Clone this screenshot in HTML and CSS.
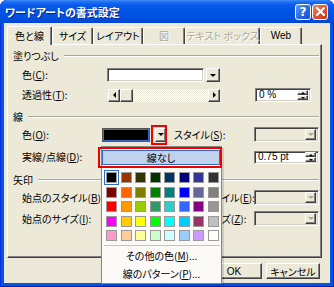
FILE: index.html
```html
<!DOCTYPE html>
<html lang="ja">
<head>
<meta charset="utf-8">
<title>ワードアートの書式設定</title>
<link rel="stylesheet" href="styles.css">
</head>
<body>
<div class="window">
  <div class="titlebar">
    <span class="title">ワードアートの書式設定</span>
    <div class="tbtns">
      <span class="tbtn help">?</span>
      <span class="tbtn close"><svg width="9" height="9" viewBox="0 0 9 9"><path d="M1 1L8 8M8 1L1 8" stroke="#fff" stroke-width="2" stroke-linecap="square"/></svg></span>
    </div>
  </div>
  <div class="client">
    <div class="tabs">
      <div class="tab sel">色と線</div>
      <div class="tab w-size">サイズ</div>
      <div class="tab w-layout">レイアウト</div>
      <div class="tab dis w-pic">図</div>
      <div class="tab dis w-text">テキスト ボックス</div>
      <div class="tab w-web">Web</div>
    </div>
    <div class="panel">
      <div class="group g1"><span>塗りつぶし</span><i class="etch"></i></div>
      <div class="row r1">
        <span class="lbl">色(<u>C</u>):</span>
        <div class="combo fillcombo">
          <span class="field white inset"></span>
          <span class="ddb raised"><i class="tri"></i></span>
        </div>
      </div>
      <div class="row r2">
        <span class="lbl">透過性(<u>T</u>):</span>
        <div class="scroll">
          <span class="sbtn raised"><i class="tri-l"></i></span>
          <span class="thumb raised"></span>
          <span class="track"></span>
          <span class="sbtn raised"><i class="tri-r"></i></span>
        </div>
        <div class="spin pct inset">
          <span class="val">0 %</span>
          <span class="spinbtns"><span class="sp raised"><i class="tri-u"></i></span><span class="sp raised"><i class="tri-d"></i></span></span>
        </div>
      </div>
      <div class="group g2"><span>線</span><i class="etch"></i></div>
      <div class="row r3">
        <span class="lbl">色(<u>O</u>):</span>
        <div class="colorcombo">
          <span class="blackfield"></span>
          <span class="cddb raised"><i class="tri"></i></span>
        </div>
        <span class="lbl2">スタイル(<u>S</u>):</span>
        <div class="dcombo inset"><span class="ddb2 raised"><i class="tri gray"></i></span></div>
      </div>
      <div class="row r4">
        <span class="lbl">実線/点線(<u>D</u>):</span>
        <span class="lbl2"></span>
        <div class="spin pt inset">
          <span class="val">0.75 pt</span>
          <span class="spinbtns"><span class="sp raised"><i class="tri-u"></i></span><span class="sp raised"><i class="tri-d"></i></span></span>
        </div>
      </div>
      <div class="group g3"><span>矢印</span><i class="etch"></i></div>
      <div class="row r5">
        <span class="lbl">始点のスタイル(<u>B</u>):</span>
        <span class="lbl2">終点のスタイル(<u>E</u>):</span>
        <div class="dcombo inset"><span class="ddb2 raised"><i class="tri gray"></i></span></div>
      </div>
      <div class="row r6">
        <span class="lbl">始点のサイズ(<u>I</u>):</span>
        <span class="lbl2">終点のサイズ(<u>Z</u>):</span>
        <div class="dcombo inset"><span class="ddb2 raised"><i class="tri gray"></i></span></div>
      </div>
    </div>
    <div class="buttons">
      <button class="btn ok">OK</button>
      <button class="btn cancel">キャンセル</button>
    </div>

    <div class="popup">
      <div class="none">線なし</div>
      <div class="palette">
        <span class="sw selsw" style="background:#000000"></span>
        <span class="sw" style="background:#993300"></span>
        <span class="sw" style="background:#333300"></span>
        <span class="sw" style="background:#003300"></span>
        <span class="sw" style="background:#003366"></span>
        <span class="sw" style="background:#000080"></span>
        <span class="sw" style="background:#333399"></span>
        <span class="sw" style="background:#333333"></span>
        <span class="sw" style="background:#800000"></span>
        <span class="sw" style="background:#FF6600"></span>
        <span class="sw" style="background:#808000"></span>
        <span class="sw" style="background:#008000"></span>
        <span class="sw" style="background:#008080"></span>
        <span class="sw" style="background:#0000FF"></span>
        <span class="sw" style="background:#666699"></span>
        <span class="sw" style="background:#808080"></span>
        <span class="sw" style="background:#FF0000"></span>
        <span class="sw" style="background:#FF9900"></span>
        <span class="sw" style="background:#99CC00"></span>
        <span class="sw" style="background:#339966"></span>
        <span class="sw" style="background:#33CCCC"></span>
        <span class="sw" style="background:#3366FF"></span>
        <span class="sw" style="background:#800080"></span>
        <span class="sw" style="background:#969696"></span>
        <span class="sw" style="background:#FF00FF"></span>
        <span class="sw" style="background:#FFCC00"></span>
        <span class="sw" style="background:#FFFF00"></span>
        <span class="sw" style="background:#00FF00"></span>
        <span class="sw" style="background:#00FFFF"></span>
        <span class="sw" style="background:#00CCFF"></span>
        <span class="sw" style="background:#993366"></span>
        <span class="sw" style="background:#C0C0C0"></span>
        <span class="sw" style="background:#FF99CC"></span>
        <span class="sw" style="background:#FFCC99"></span>
        <span class="sw" style="background:#FFFF99"></span>
        <span class="sw" style="background:#CCFFCC"></span>
        <span class="sw" style="background:#CCFFFF"></span>
        <span class="sw" style="background:#99CCFF"></span>
        <span class="sw" style="background:#CC99FF"></span>
        <span class="sw" style="background:#FFFFFF"></span>
      </div>
      <div class="sep"></div>
      <div class="item">その他の色(<u>M</u>)...</div>
      <div class="item">線のパターン(<u>P</u>)...</div>
    </div>
    <div class="mark m1"></div>
    <div class="mark m2"></div>
  </div>
</div>
</body>
</html>
```

FILE: styles.css
```css
* { box-sizing: border-box; }
html, body { margin: 0; padding: 0; }
body {
  width: 334px; height: 287px; overflow: hidden;
  font-family: "Noto Sans CJK JP", "Noto Sans", sans-serif;
  font-size: 10px; font-feature-settings: "palt"; color: #000;
  background: #fff;
}
u { text-decoration: underline; text-underline-offset: 1px; }

.window {
  width: 334px; height: 287px;
  background: #0055E5;
  box-shadow: inset 1px 0 #0831D9, inset -1px 0 #001EA0, inset 0 -1px #001EA0;
  display: flex; flex-direction: column;
  border-radius: 7px 7px 0 0;
  overflow: hidden;
}
.titlebar {
  height: 23px; flex: none;
  display: flex; align-items: center; justify-content: space-between;
  padding: 0 6px 0 5px;
  background: linear-gradient(#3C8CF8 0, #1F6DF1 2px, #0A5AEB 5px, #0055E5 10px, #0052E0 17px, #0049D6 22px, #003FC8 23px);
}
.title {
  color: #fff; font-weight: bold; font-size: 11px;
  text-shadow: 1px 1px #0A1E8C;
  letter-spacing: 0;
}
.tbtns { display: flex; gap: 1px; }
.tbtn {
  width: 16px; height: 16px; border: 1px solid #fff; border-radius: 3px;
  display: flex; align-items: center; justify-content: center;
  color: #fff; font-family: "DejaVu Sans", sans-serif; font-weight: bold; font-size: 12px; line-height: 1;
}
.help { background: linear-gradient(135deg, #5E9BFF, #2663E0 60%, #1B4FD0); }
.close { background: linear-gradient(135deg, #F0886A, #E04C2B 60%, #C63A1A); }

.client {
  flex: 1; margin: 0 4px 4px 4px;
  background: #ECE9D8; position: relative;
  display: flex; flex-direction: column;
}

/* tabs */
.tabs { display: flex; align-items: flex-end; height: 21px; margin-left: 3px; }
.tab {
  height: 17px; padding: 0; text-align: center; line-height: 16px;
  border-top: 1px solid #fff; border-left: 1px solid #fff;
  border-right: 1px solid #404040;
  box-shadow: inset -1px 0 #808080;
  border-radius: 2px 2px 0 0;
  background: #ECE9D8;
}
.tab.sel { width: 45px; height: 19px; line-height: 18px; margin-bottom: -1px; position: relative; z-index: 1; }
.w-size { width: 41px; }
.w-layout { width: 50px; }
.w-pic { width: 42px; }
.w-text { width: 75px; }
.w-web { width: 42px; font-family: "Liberation Sans", sans-serif; }
.dis { color: #ACA899; text-shadow: 1px 1px #fff; }

/* panel */
.panel {
  margin-left: 3px; width: 315px; height: 214px;
  border-top: 1px solid #fff; border-left: 1px solid #fff;
  border-right: 1px solid #404040; border-bottom: 1px solid #404040;
  box-shadow: inset -1px -1px #808080;
  padding: 0 2px 0 5px;
}
.group { display: flex; align-items: center; height: 12px; }
.group span { line-height: 12px; }
.etch { flex: 1; height: 2px; margin-left: 5px; border-top: 1px solid #ACA899; border-bottom: 1px solid #fff; }
.g1 { margin-top: 5px; }
.g2 { margin-top: 9px; }
.g3 { margin-top: 10px; }

.row {
  display: grid; grid-template-columns: 80px 72px 80px 66px;
  align-items: center; height: 14px; padding-left: 9px;
}
.r1 { margin-top: 6px; }
.r2 { margin-top: 6px; }
.r3 { margin-top: 4px; }
.r4 { margin-top: 9px; }
.r5 { margin-top: 4px; }
.r6 { margin-top: 7px; }
.lbl { grid-column: 1; white-space: nowrap; line-height: 14px; }
.lbl2 { grid-column: 3; white-space: nowrap; line-height: 14px; }

.inset {
  border: 1px solid; border-color: #808080 #fff #fff #808080;
  box-shadow: inset 1px 1px #404040, inset -1px -1px #D4D0C8;
}
.raised {
  background: #ECE9D8;
  border: 1px solid; border-color: #fff #404040 #404040 #fff;
  box-shadow: inset -1px -1px #808080;
  display: flex; align-items: center; justify-content: center;
}
.tri { width: 0; height: 0; border-left: 3px solid transparent; border-right: 3px solid transparent; border-top: 3px solid #000; }
.tri.gray { border-top-color: #ACA899; }
.tri-l { width: 0; height: 0; border-top: 3px solid transparent; border-bottom: 3px solid transparent; border-right: 3px solid #000; }
.tri-r { width: 0; height: 0; border-top: 3px solid transparent; border-bottom: 3px solid transparent; border-left: 3px solid #000; }
.tri-u { width: 0; height: 0; border-left: 2px solid transparent; border-right: 2px solid transparent; border-bottom: 2px solid #000; }
.tri-d { width: 0; height: 0; border-left: 2px solid transparent; border-right: 2px solid transparent; border-top: 2px solid #000; }

.combo { display: flex; gap: 2px; height: 14px; }
.fillcombo { grid-column: 2 / 4; margin-left: 5px; width: 113px; }
.field { width: 97px; height: 14px; display: block; }
.white { background: #fff; }
.ddb { width: 14px; height: 14px; }

.scroll { grid-column: 2 / 4; margin-left: 6px; width: 112px; height: 13px; display: flex; }
.sbtn { width: 12px; height: 13px; flex: none; }
.thumb { width: 13px; height: 13px; flex: none; }
.track {
  flex: 1; height: 13px;
  background-color: #ECE9D8;
  background-image: repeating-conic-gradient(#fff 0 25%, #ECE9D8 0 50%);
  background-size: 2px 2px;
}

.spin { grid-column: 4; display: flex; align-items: center; justify-content: space-between; background: #fff; padding: 0 2px 0 3px; }
.spin .val { line-height: 12px; font-family: "Liberation Sans", "Noto Sans CJK JP", sans-serif; font-size: 10px; }
.pct { width: 56px; height: 14px; margin-left: 1px; }
.pt { width: 65px; height: 13px; }
.spinbtns { display: flex; flex-direction: column; width: 11px; height: 10px; }
.sp { height: 5px; width: 11px; }

.colorcombo { grid-column: 2; display: flex; align-items: center; height: 14px; }
.blackfield {
  width: 48px; height: 14px; background: #000;
  border: 1px solid #555; box-shadow: inset 0 0 0 1px #3D6BC6, inset 0 0 0 2px #000;
}
.cddb { width: 11px; height: 14px; margin-left: 5px; }

.dcombo { grid-column: 4; width: 65px; height: 15px; background: #ECE9D8; display: flex; justify-content: flex-end; align-items: center; padding-right: 2px; }
.ddb2 { width: 11px; height: 11px; }

/* buttons */
.buttons { display: flex; justify-content: flex-end; gap: 4px; padding-right: 10px; margin-top: 5px; }
.btn {
  height: 16px; padding: 0; margin: 0;
  font-family: "Noto Sans CJK JP", sans-serif; font-size: 10px; font-feature-settings: "palt";
  background: #ECE9D8; color: #000;
  border: 1px solid; border-color: #fff #404040 #404040 #fff;
  box-shadow: inset -1px -1px #808080;
  line-height: 13px;
}
.ok { width: 56px; font-family: "Liberation Sans", sans-serif; }
.cancel { width: 54px; }

/* popup */
.popup {
  position: absolute; left: 97px; top: 123px; width: 121px; height: 138px;
  background: #FBFAF6;
  border: 1px solid #8A867A;
  box-shadow: 2px 2px 0 rgba(0,0,0,0.12);
  z-index: 5;
}
.none {
  margin-top: 3px; width: 118px; height: 15px;
  background: #C1D2EE; border: 1px solid #316AC5;
  text-align: center; line-height: 13px;
}
.palette {
  margin: 7px 0 0 4px;
  display: grid; grid-template-columns: repeat(8, 11px);
  grid-auto-rows: 11px; column-gap: 3.5px; row-gap: 3.5px;
}
.sw { display: block; width: 11px; height: 11px; border: 1px solid #9A9A9A; }
.selsw { outline: 1px solid #316AC5; outline-offset: 1px; }
.sep { margin: 4px 1px 0 2px; height: 1px; background: #C5C2B8; }
.item { text-align: center; height: 17px; line-height: 17px; margin-top: 1px; }

/* red annotation boxes */
.mark { position: absolute; border: 2px solid #F00000; z-index: 6; }
.m1 { left: 147px; top: 102px; width: 16px; height: 20px; }
.m2 { left: 94px; top: 124px; width: 124px; height: 21px; }
```
